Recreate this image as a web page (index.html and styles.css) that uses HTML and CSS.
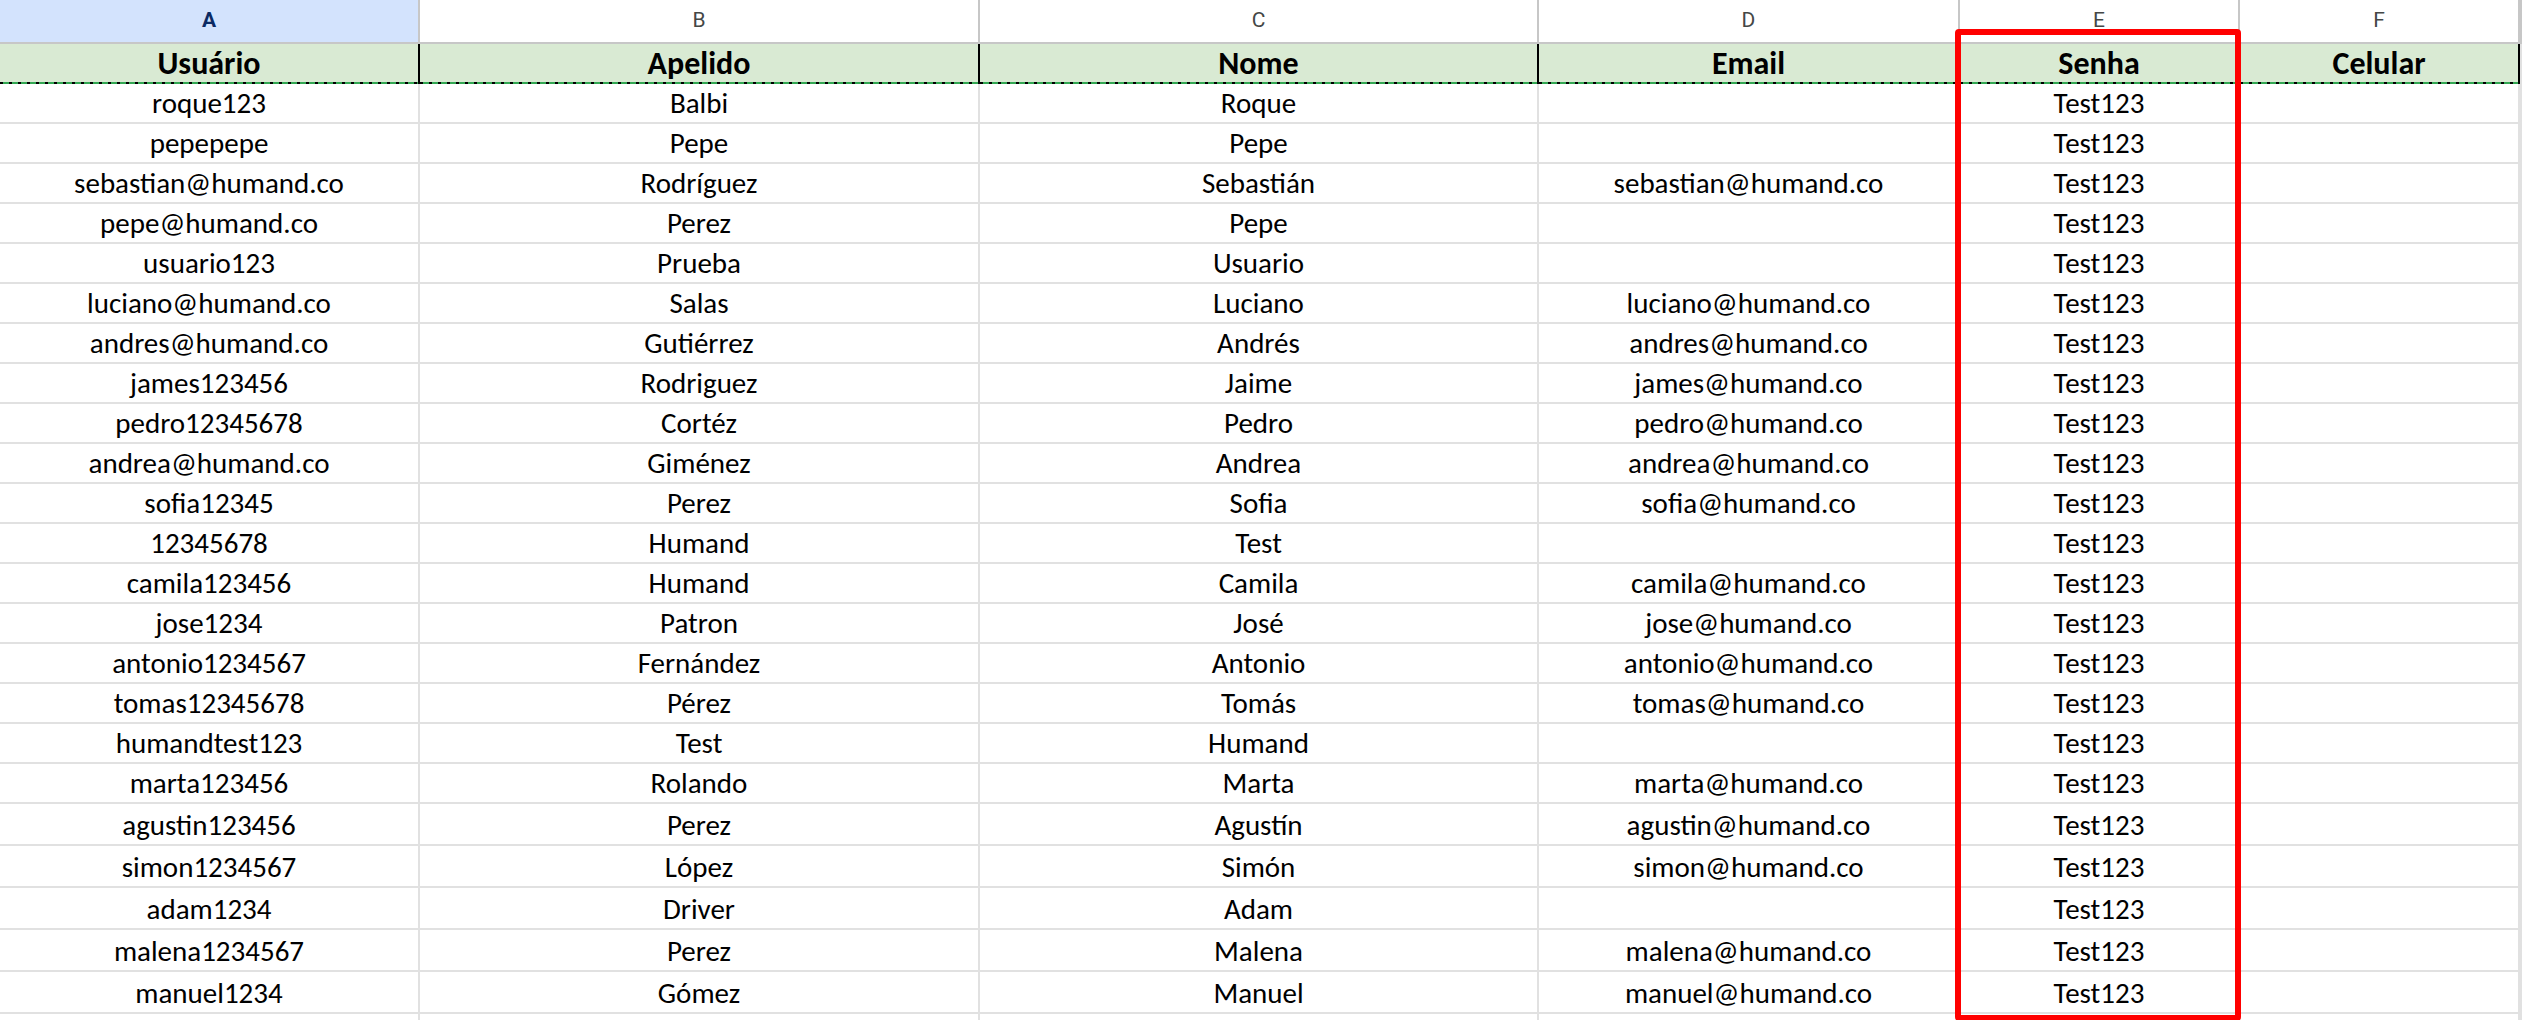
FILE: index.html
```html
<!DOCTYPE html>
<html lang="pt">
<head>
<meta charset="utf-8">
<title>Usuários</title>
<link rel="stylesheet" href="styles.css">
</head>
<body>
<div class="sheet">
  <div class="row letters">
    <div class="cell sel">A</div><div class="cell">B</div><div class="cell">C</div><div class="cell">D</div><div class="cell">E</div><div class="cell">F</div><div class="cell"></div>
  </div>
  <div class="row hdr">
    <div class="cell">Usuário</div><div class="cell">Apelido</div><div class="cell">Nome</div><div class="cell">Email</div><div class="cell">Senha</div><div class="cell">Celular</div><div class="cell"></div>
  </div>
  <div class="row data"><div class="cell">roque123</div><div class="cell">Balbi</div><div class="cell">Roque</div><div class="cell"></div><div class="cell">Test123</div><div class="cell"></div><div class="cell"></div></div>
  <div class="row data"><div class="cell">pepepepe</div><div class="cell">Pepe</div><div class="cell">Pepe</div><div class="cell"></div><div class="cell">Test123</div><div class="cell"></div><div class="cell"></div></div>
  <div class="row data"><div class="cell">sebastian@humand.co</div><div class="cell">Rodríguez</div><div class="cell">Sebastián</div><div class="cell">sebastian@humand.co</div><div class="cell">Test123</div><div class="cell"></div><div class="cell"></div></div>
  <div class="row data"><div class="cell">pepe@humand.co</div><div class="cell">Perez</div><div class="cell">Pepe</div><div class="cell"></div><div class="cell">Test123</div><div class="cell"></div><div class="cell"></div></div>
  <div class="row data"><div class="cell">usuario123</div><div class="cell">Prueba</div><div class="cell">Usuario</div><div class="cell"></div><div class="cell">Test123</div><div class="cell"></div><div class="cell"></div></div>
  <div class="row data"><div class="cell">luciano@humand.co</div><div class="cell">Salas</div><div class="cell">Luciano</div><div class="cell">luciano@humand.co</div><div class="cell">Test123</div><div class="cell"></div><div class="cell"></div></div>
  <div class="row data"><div class="cell">andres@humand.co</div><div class="cell">Gutiérrez</div><div class="cell">Andrés</div><div class="cell">andres@humand.co</div><div class="cell">Test123</div><div class="cell"></div><div class="cell"></div></div>
  <div class="row data"><div class="cell">james123456</div><div class="cell">Rodriguez</div><div class="cell">Jaime</div><div class="cell">james@humand.co</div><div class="cell">Test123</div><div class="cell"></div><div class="cell"></div></div>
  <div class="row data"><div class="cell">pedro12345678</div><div class="cell">Cortéz</div><div class="cell">Pedro</div><div class="cell">pedro@humand.co</div><div class="cell">Test123</div><div class="cell"></div><div class="cell"></div></div>
  <div class="row data"><div class="cell">andrea@humand.co</div><div class="cell">Giménez</div><div class="cell">Andrea</div><div class="cell">andrea@humand.co</div><div class="cell">Test123</div><div class="cell"></div><div class="cell"></div></div>
  <div class="row data"><div class="cell">sofia12345</div><div class="cell">Perez</div><div class="cell">Sofia</div><div class="cell">sofia@humand.co</div><div class="cell">Test123</div><div class="cell"></div><div class="cell"></div></div>
  <div class="row data"><div class="cell">12345678</div><div class="cell">Humand</div><div class="cell">Test</div><div class="cell"></div><div class="cell">Test123</div><div class="cell"></div><div class="cell"></div></div>
  <div class="row data"><div class="cell">camila123456</div><div class="cell">Humand</div><div class="cell">Camila</div><div class="cell">camila@humand.co</div><div class="cell">Test123</div><div class="cell"></div><div class="cell"></div></div>
  <div class="row data"><div class="cell">jose1234</div><div class="cell">Patron</div><div class="cell">José</div><div class="cell">jose@humand.co</div><div class="cell">Test123</div><div class="cell"></div><div class="cell"></div></div>
  <div class="row data"><div class="cell">antonio1234567</div><div class="cell">Fernández</div><div class="cell">Antonio</div><div class="cell">antonio@humand.co</div><div class="cell">Test123</div><div class="cell"></div><div class="cell"></div></div>
  <div class="row data"><div class="cell">tomas12345678</div><div class="cell">Pérez</div><div class="cell">Tomás</div><div class="cell">tomas@humand.co</div><div class="cell">Test123</div><div class="cell"></div><div class="cell"></div></div>
  <div class="row data"><div class="cell">humandtest123</div><div class="cell">Test</div><div class="cell">Humand</div><div class="cell"></div><div class="cell">Test123</div><div class="cell"></div><div class="cell"></div></div>
  <div class="row data"><div class="cell">marta123456</div><div class="cell">Rolando</div><div class="cell">Marta</div><div class="cell">marta@humand.co</div><div class="cell">Test123</div><div class="cell"></div><div class="cell"></div></div>
  <div class="row data tall"><div class="cell">agustin123456</div><div class="cell">Perez</div><div class="cell">Agustín</div><div class="cell">agustin@humand.co</div><div class="cell">Test123</div><div class="cell"></div><div class="cell"></div></div>
  <div class="row data tall"><div class="cell">simon1234567</div><div class="cell">López</div><div class="cell">Simón</div><div class="cell">simon@humand.co</div><div class="cell">Test123</div><div class="cell"></div><div class="cell"></div></div>
  <div class="row data tall"><div class="cell">adam1234</div><div class="cell">Driver</div><div class="cell">Adam</div><div class="cell"></div><div class="cell">Test123</div><div class="cell"></div><div class="cell"></div></div>
  <div class="row data tall"><div class="cell">malena1234567</div><div class="cell">Perez</div><div class="cell">Malena</div><div class="cell">malena@humand.co</div><div class="cell">Test123</div><div class="cell"></div><div class="cell"></div></div>
  <div class="row data tall"><div class="cell">manuel1234</div><div class="cell">Gómez</div><div class="cell">Manuel</div><div class="cell">manuel@humand.co</div><div class="cell">Test123</div><div class="cell"></div><div class="cell"></div></div>
  <div class="row data tall"><div class="cell"></div><div class="cell"></div><div class="cell"></div><div class="cell"></div><div class="cell"></div><div class="cell"></div><div class="cell"></div></div>
  <div class="highlight"></div>
</div>
</body>
</html>
```
FILE: styles.css
```css
* { box-sizing: border-box; }
html, body { margin: 0; padding: 0; background: #fff; }
body { overflow: hidden; }

.sheet {
  position: relative;
  width: 2522px;
  height: 1020px;
  overflow: hidden;
  font-family: Carlito, "Liberation Sans Narrow", "DejaVu Sans Condensed", "Liberation Sans", sans-serif;
  color: #000;
}

.row {
  display: grid;
  grid-template-columns: 420px 560px 559px 421px 280px 280px 2px;
}

.cell {
  display: flex;
  align-items: center;
  justify-content: center;
  white-space: nowrap;
  overflow: hidden;
  border-right: 2px solid #e1e1e1;
  border-bottom: 2px solid #e1e1e1;
}

.letters .cell {
  height: 44px;
  font-family: Roboto, "Liberation Sans", sans-serif;
  font-size: 21px;
  color: #444746;
  border-right-color: #c7c7c7;
  border-bottom-color: #c7c7c7;
  padding-bottom: 2px;
}
.letters .sel {
  background: #d3e3fd;
  color: #0b2a63;
  font-weight: 700;
}

.hdr .cell {
  position: relative;
  height: 40px;
  background: #d9ead3;
  font-weight: 700;
  font-size: 32px;
  border-right-color: #000;
  border-bottom: none;
  padding-bottom: 1px;
}
.hdr .cell:last-child { background: #fff; border-right-color: #e1e1e1; }
.hdr .cell::after {
  content: "";
  position: absolute;
  left: 0;
  right: -2px;
  bottom: 0;
  height: 2px;
  background: repeating-linear-gradient(to right, #000 0 3px, #34a853 3px 9px);
}
.hdr .cell:last-child::after { display: none; }

.data .cell {
  height: 40px;
  font-size: 29px;
  padding-top: 0;
}
.data.tall .cell {
  height: 42px;
  padding-top: 2px;
}

.highlight {
  position: absolute;
  left: 1955px;
  top: 29px;
  width: 286px;
  height: 992px;
  border: 6px solid #ff0000;
  border-radius: 4px;
  pointer-events: none;
}
```
